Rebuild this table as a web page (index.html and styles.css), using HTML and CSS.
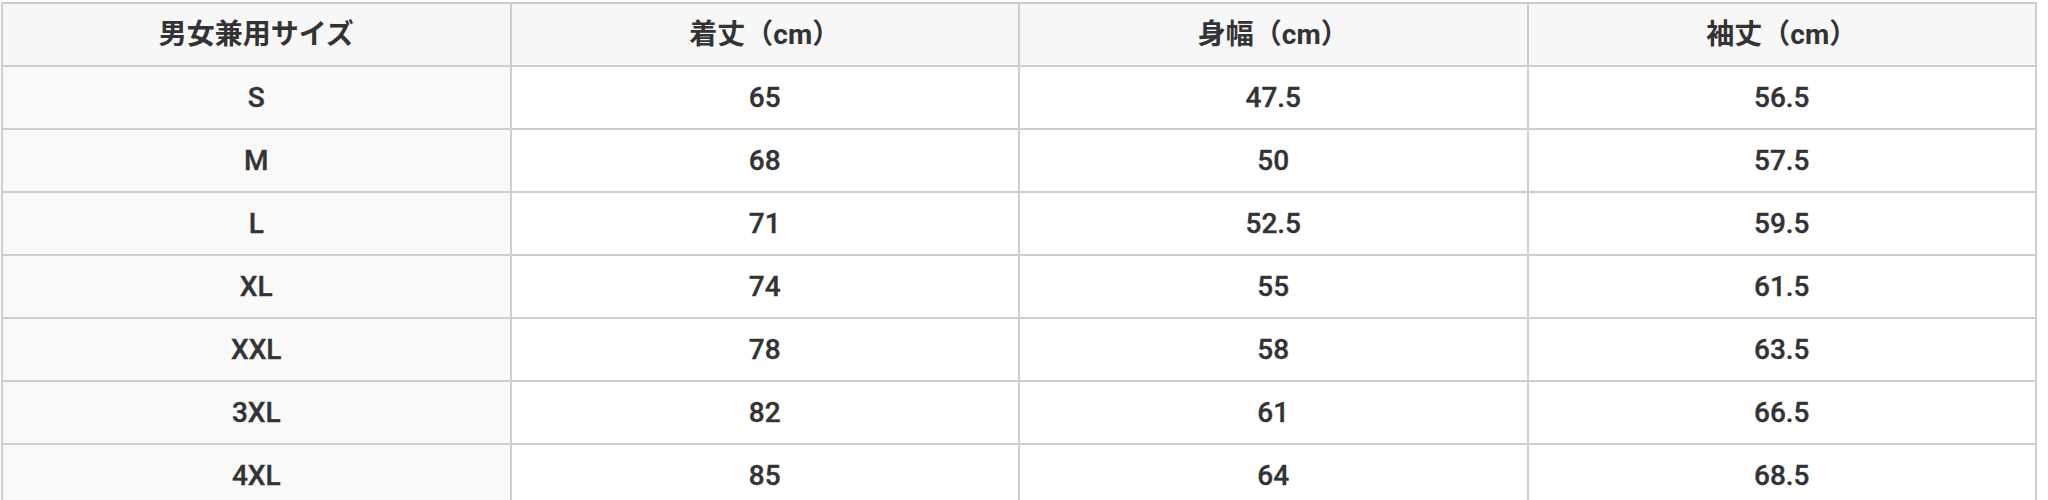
FILE: index.html
```html
<!DOCTYPE html>
<html lang="ja">
<head>
<meta charset="utf-8">
<title>サイズ表</title>
<link rel="stylesheet" href="styles.css">
</head>
<body>
<table class="size-table">
  <thead>
    <tr>
      <th>男女兼用サイズ</th>
      <th>着丈（cm）</th>
      <th>身幅（cm）</th>
      <th>袖丈（cm）</th>
    </tr>
  </thead>
  <tbody>
    <tr><th>S</th><td>65</td><td>47.5</td><td>56.5</td></tr>
    <tr><th>M</th><td>68</td><td>50</td><td>57.5</td></tr>
    <tr><th>L</th><td>71</td><td>52.5</td><td>59.5</td></tr>
    <tr><th>XL</th><td>74</td><td>55</td><td>61.5</td></tr>
    <tr><th>XXL</th><td>78</td><td>58</td><td>63.5</td></tr>
    <tr><th>3XL</th><td>82</td><td>61</td><td>66.5</td></tr>
    <tr><th>4XL</th><td>85</td><td>64</td><td>68.5</td></tr>
  </tbody>
</table>
</body>
</html>
```
FILE: styles.css
```css
html, body {
  margin: 0;
  padding: 0;
  background: #ffffff;
}

body {
  padding: 2px 0 0 1px;
  font-family: Roboto, "Noto Sans CJK JP", sans-serif;
  color: #333333;
}

.size-table {
  width: 2036px;
  border-collapse: collapse;
  table-layout: fixed;
  font-size: 28px;
  font-weight: 500;
}

.size-table th,
.size-table td {
  border: 2px solid #c9d0d0;
  height: 61px;
  padding: 0;
  text-align: center;
  vertical-align: middle;
  font-weight: 500;
  line-height: 1.2;
  -webkit-text-stroke: 0.35px #333333;
}

.size-table thead th {
  background: #f7f7f7;
  font-weight: 700;
  -webkit-text-stroke: 0;
}

.size-table tbody th {
  background: #f9f9f9;
}

.size-table tbody td {
  background: #ffffff;
}
```
